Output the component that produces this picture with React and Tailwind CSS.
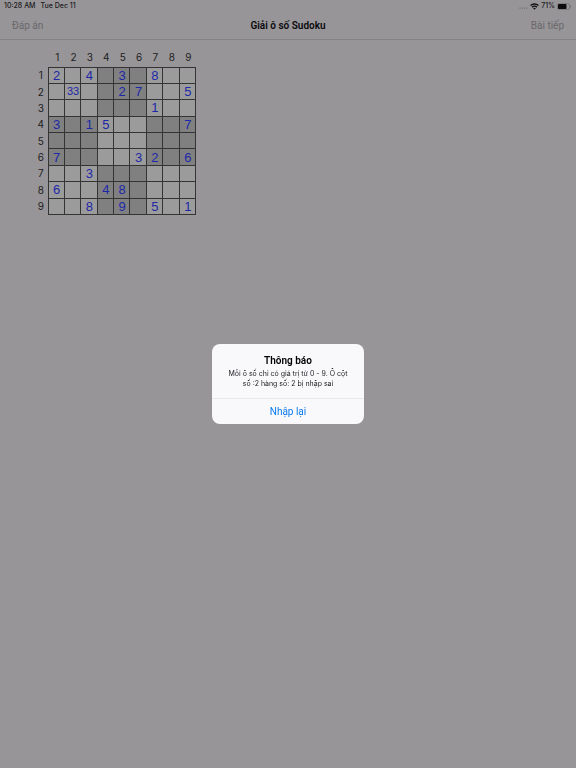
import React, { useState } from 'react';
import clsx from 'clsx';

const START = [
    ['2', '', '4', '', '3', '', '8', '', ''],
    ['', '33', '', '', '2', '7', '', '', '5'],
    ['', '', '', '', '', '', '1', '', ''],
    ['3', '', '1', '5', '', '', '', '', '7'],
    ['', '', '', '', '', '', '', '', ''],
    ['7', '', '', '', '', '3', '2', '', '6'],
    ['', '', '3', '', '', '', '', '', ''],
    ['6', '', '', '4', '8', '', '', '', ''],
    ['', '', '8', '', '9', '', '5', '', '1'],
];

const NUMBERS = [1, 2, 3, 4, 5, 6, 7, 8, 9];

const StatusBar = () => (
    <div className="h-3 px-1 flex items-center justify-between text-[7px] leading-3 font-medium text-[#1b1a1d] font-['Inter',sans-serif]">
        <div className="flex gap-[5px]">
            <span>10:28 AM</span>
            <span>Tue Dec 11</span>
        </div>
        <div className="flex items-center gap-[2px]">
            <svg width="9" height="6" viewBox="0 0 9 6" fill="#5d5c60">
                <circle cx="1" cy="5" r=".6" />
                <circle cx="3.3" cy="5" r=".6" />
                <circle cx="5.6" cy="5" r=".6" />
                <circle cx="7.9" cy="5" r=".6" />
            </svg>
            <svg width="9" height="7" viewBox="0 0 16 12" fill="none" stroke="#111" strokeWidth="2.4">
                <path d="M1 4.4a10 10 0 0 1 14 0" />
                <path d="M3.6 7.2a6.2 6.2 0 0 1 8.8 0" />
                <path d="M8 11.6 5.6 9.2a3.4 3.4 0 0 1 4.8 0z" fill="#111" stroke="none" />
            </svg>
            <span>71%</span>
            <svg width="15" height="7" viewBox="0 0 15 7" fill="none">
                <rect x=".5" y=".5" width="12" height="6" rx="1.5" stroke="#6b6a6d" strokeWidth=".6" />
                <rect x="1" y="1" width="8.5" height="5" rx=".8" fill="#0c0c0d" />
                <path d="M13.5 2.4v2.2" stroke="#6b6a6d" strokeWidth=".8" />
            </svg>
        </div>
    </div>
);

const Alert = ({ title, message, onClose }) => (
    <div className="fixed inset-0 flex items-center justify-center">
        <div role="alertdialog" aria-label={title} className="w-[152px] rounded-lg bg-[#f9f8fb] overflow-hidden text-center">
            <div className="px-3 pt-[11px] pb-[9px]">
                <h2 className="text-[10px] leading-3 font-semibold text-black">{title}</h2>
                <p className="text-[7px] leading-[10px] text-[#1d1c1f] mt-[2px] font-['Inter',sans-serif]">{message}</p>
            </div>
            <button
                onClick={onClose}
                className="block w-full h-[26px] border-t border-[#e8e7ea] text-[10px] leading-6 text-[#0a7cf0]"
            >
                Nhập lại
            </button>
        </div>
    </div>
);

const App = () => {
    const [cells, setCells] = useState(START);
    const [showAlert, setShowAlert] = useState(true);

    const handleChange = (row, col, value) => {
        setCells(cells.map((line, r) => (r === row ? line.map((v, c) => (c === col ? value : v)) : line)));
    };

    // every second 3x3 box is darker
    const isDark = (row, col) => (Math.floor(row / 3) + Math.floor(col / 3)) % 2 === 1;

    return (
        <div className="min-h-screen bg-[#979598] font-['Roboto','Noto_Sans',sans-serif]">
            <StatusBar />
            <header className="h-7 px-3 border-b border-[#848285] grid grid-cols-3 items-center text-[10px] leading-4">
                <button className="justify-self-start text-[#69676a]">Đáp án</button>
                <h1 className="text-center font-semibold text-[#0b0a0c]">Giải ô số Sudoku</h1>
                <button className="justify-self-end text-[#69676a]">Bài tiếp</button>
            </header>

            <main className="pl-8 pt-[7px]">
                <table className="w-[164px] h-[168px] table-fixed border-collapse text-[10px] text-[#1d1c1e] font-['Inter',sans-serif]">
                    <thead>
                        <tr className="h-5">
                            <td className="w-4 p-0"></td>
                            {NUMBERS.map((n) => (
                                <th key={n} scope="col" className="p-0 pl-[2px] font-normal leading-4 align-middle">{n}</th>
                            ))}
                        </tr>
                    </thead>
                    <tbody>
                        {cells.map((line, row) => (
                            <tr key={row}>
                                <th scope="row" className="p-0 pl-[2px] font-normal leading-[14px]">{row + 1}</th>
                                {line.map((value, col) => (
                                    <td
                                        key={col}
                                        className={clsx('p-0 border border-[#343434]', isDark(row, col) ? 'bg-[#808080]' : 'bg-[#9b9b9b]')}
                                    >
                                        <input
                                            aria-label={`Hàng ${row + 1} cột ${col + 1}`}
                                            value={value}
                                            onChange={(e) => handleChange(row, col, e.target.value)}
                                            className={clsx(
                                                "block w-full h-[15px] leading-[15px] p-0 pl-px text-center text-[#1d28a8] outline-none font-['Liberation_Sans',sans-serif]",
                                                value.length > 1 ? 'text-[11px]' : 'text-[13px]'
                                            )}
                                        />
                                    </td>
                                ))}
                            </tr>
                        ))}
                    </tbody>
                </table>
            </main>

            {showAlert && (
                <Alert
                    title="Thông báo"
                    message="Mỗi ô số chỉ có giá trị từ 0 - 9. Ô cột số :2 hàng số: 2 bị nhập sai"
                    onClose={() => setShowAlert(false)}
                />
            )}
        </div>
    );
};

export default App;
